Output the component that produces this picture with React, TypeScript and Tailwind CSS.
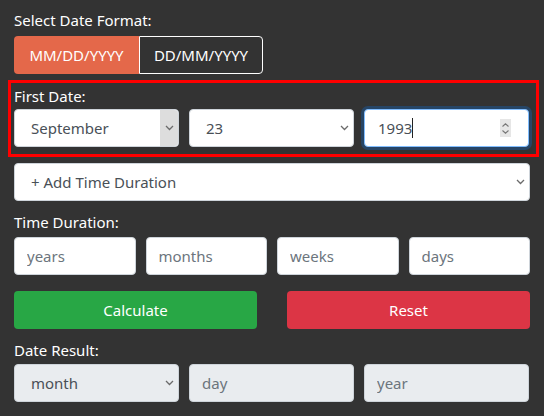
import React, { useState } from "react";

const font = { fontFamily: '"Noto Sans", "Open Sans", sans-serif' };

const Chevron = () => (
  <svg className="w-[9px] h-[6px]" viewBox="0 0 9 6" fill="none">
    <path d="M1 1l3.5 3.5L8 1" stroke="#6b6b6b" strokeWidth="1.3" />
  </svg>
);

const FakeSelect = ({
  value,
  disabled,
  shaded,
  className = "",
}: {
  value: string;
  disabled?: boolean;
  shaded?: boolean;
  className?: string;
}) => (
  <div
    className={`relative h-[38px] flex items-center rounded border border-[#ced4da] ${
      disabled ? "bg-[#e9ecef]" : "bg-white"
    } ${className}`}
  >
    <span className="pl-4 text-[#495057] text-[15px]">{value}</span>
    <span
      className={`absolute right-0 top-0 bottom-0 w-[18px] flex items-center justify-center rounded-r ${
        shaded ? "bg-[#dddddd]" : ""
      }`}
    >
      <Chevron />
    </span>
  </div>
);

const TextBox = ({ placeholder, disabled }: { placeholder: string; disabled?: boolean }) => (
  <input
    placeholder={placeholder}
    disabled={disabled}
    className={`h-[38px] w-full min-w-0 rounded border border-[#ced4da] px-3 text-[15px] text-[#495057] placeholder:text-[#6c757d] outline-none ${
      disabled ? "bg-[#e9ecef]" : "bg-white"
    }`}
  />
);

export default function App() {
  const [format, setFormat] = useState("mdy");

  return (
    <div className="w-[544px] h-[416px] bg-[#333333] text-white overflow-hidden" style={font}>
      <div className="pl-[14px] pr-[14px] pt-2">
        <div className="h-6 leading-6 text-[15px]">Select Date Format:</div>

        <div className="mt-1 flex h-[38px] w-[249px] text-[15px]">
          <button
            onClick={() => setFormat("mdy")}
            className={`w-[125px] rounded-l ${format === "mdy" ? "bg-[#e4684a]" : "border border-white"}`}
          >
            MM/DD/YYYY
          </button>
          <button
            onClick={() => setFormat("dmy")}
            className={`w-[124px] rounded-r ${format === "dmy" ? "bg-[#e4684a]" : "border border-white"}`}
          >
            DD/MM/YYYY
          </button>
        </div>

        <div className="mt-[6px] -ml-[6px] w-[531px] border-[3px] border-[#ff0000] pl-[3px] pr-[7px] pt-px pb-[7px]">
          <div className="h-6 leading-6 text-[15px]">First Date:</div>
          <div className="mt-px grid grid-cols-3 gap-[10px]">
            <FakeSelect value="September" shaded />
            <FakeSelect value="23" />
            <div className="relative h-[38px] flex items-center rounded border border-[#80bdff] bg-white shadow-[0_0_0_3px_rgba(0,123,255,0.25)]">
              <span className="pl-[13px] text-[15px] text-[#495057]">1993</span>
              <span className="w-px h-[20px] bg-[#222]" />
              <span className="absolute right-[17px] top-[9px] w-[11px] h-[18px] bg-[#e6e6e6] flex flex-col items-center justify-center gap-[3px]">
                <svg className="w-[7px] h-[4px]" viewBox="0 0 7 4" fill="none">
                  <path d="M0.5 3.5L3.5 0.8 6.5 3.5" stroke="#777" strokeWidth="1.1" />
                </svg>
                <svg className="w-[7px] h-[4px]" viewBox="0 0 7 4" fill="none">
                  <path d="M0.5 0.5L3.5 3.2 6.5 0.5" stroke="#777" strokeWidth="1.1" />
                </svg>
              </span>
            </div>
          </div>
        </div>

        <FakeSelect value="+ Add Time Duration" className="mt-[6px] w-[516px]" />

        <div className="mt-[9px] h-6 leading-6 text-[15px]">Time Duration:</div>
        <div className="mt-[3px] grid grid-cols-4 gap-[10px]">
          <TextBox placeholder="years" />
          <TextBox placeholder="months" />
          <TextBox placeholder="weeks" />
          <TextBox placeholder="days" />
        </div>

        <div className="mt-4 grid grid-cols-2 gap-[30px]">
          <button className="h-[38px] rounded bg-[#28a745] text-[15px]">Calculate</button>
          <button className="h-[38px] rounded bg-[#dc3545] text-[15px]">Reset</button>
        </div>

        <div className="mt-[9px] h-6 leading-6 text-[15px]">Date Result:</div>
        <div className="mt-[2px] grid grid-cols-3 gap-[10px] w-[515px]">
          <FakeSelect value="month" disabled />
          <TextBox placeholder="day" disabled />
          <TextBox placeholder="year" disabled />
        </div>
      </div>
    </div>
  );
}
